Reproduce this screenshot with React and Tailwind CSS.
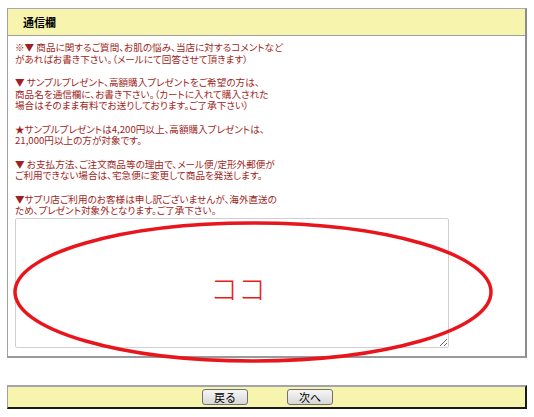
import React from "react";

const notes = [
  ["※▼ 商品に関するご質問、お肌の悩み、当店に対するコメントなど", "があればお書き下さい。（メールにて回答させて頂きます）"],
  [
    "▼ サンプルプレゼント、高額購入プレゼントをご希望の方は、",
    "商品名を通信欄に、お書き下さい。（カートに入れて購入された",
    "場合はそのまま有料でお送りしております。ご了承下さい）",
  ],
  ["★サンプルプレゼントは4,200円以上、高額購入プレゼントは、", "21,000円以上の方が対象です。"],
  ["▼ お支払方法、ご注文商品等の理由で、メール便/定形外郵便が", "ご利用できない場合は、宅急便に変更して商品を発送します。"],
  ["▼サプリ店ご利用のお客様は申し訳ございませんが、海外直送の", "ため、プレゼント対象外となります。ご了承下さい。"],
];

const FONT = "font-['Noto_Sans_CJK_JP','Noto_Sans',sans-serif]";

const Button = ({ children }) => (
  <button className="w-[46px] h-[16px] rounded-[3px] border border-[#707070] bg-gradient-to-b from-[#f6f6f6] to-[#d8d8d8] text-[11px] leading-none text-black flex items-center justify-center">
    {children}
  </button>
);

export default function App() {
  return (
    <div className={`relative w-[534px] h-[417px] bg-white overflow-hidden ${FONT}`}>
      <div className="pt-[8px] pl-[7px]">
        {/* message panel */}
        <div className="w-[520px] border border-t-[#a8a8b8] border-l-[#a0a0a0] border-r-2 border-r-[#8c8c8c] border-b-2 border-b-[#9a9a9a]">
          <div className="h-[27px] bg-[#f6f4ad] border-b border-[#a0a0a0] pl-[15px] flex items-center text-[11px] font-bold text-black">
            通信欄
          </div>
          <div className="pt-[6px] pl-[7px] pb-[8px]">
            <div className="text-[9.6px] leading-[11.67px] text-[#a01f24] [font-feature-settings:'palt']">
              {notes.map((para, i) => (
                <div key={i} className={i > 0 ? "mt-[11.67px]" : ""}>
                  {para.map((line, j) => (
                    <div key={j} className="whitespace-nowrap">
                      {line}
                    </div>
                  ))}
                </div>
              ))}
            </div>
            <textarea className="block mt-[1px] w-[434px] h-[130px] border border-[#cfcfd4] rounded-[2px] bg-white resize" />
          </div>
        </div>

        {/* nav bar */}
        <div className="mt-[27px] w-[520px] h-[24px] bg-[#f6f4ad] border-t-2 border-t-[#a4a4b0] border-l border-l-[#a0a0a0] border-b-2 border-b-[#1a1a1a] border-r-2 border-r-[#1a1a1a] flex items-center justify-center gap-[39px] pl-[2px]">
          <Button>戻る</Button>
          <Button>次へ</Button>
        </div>
      </div>

      {/* red annotation */}
      <svg className="absolute left-0 top-0 pointer-events-none" width="534" height="417">
        <ellipse cx="253" cy="292" rx="238" ry="69" fill="none" stroke="#e8161c" strokeWidth="3.5" />
      </svg>
      <div className="absolute left-[210px] top-[274px] text-[28px] leading-none font-light text-[#e41e20] pointer-events-none">
        ココ
      </div>
    </div>
  );
}
